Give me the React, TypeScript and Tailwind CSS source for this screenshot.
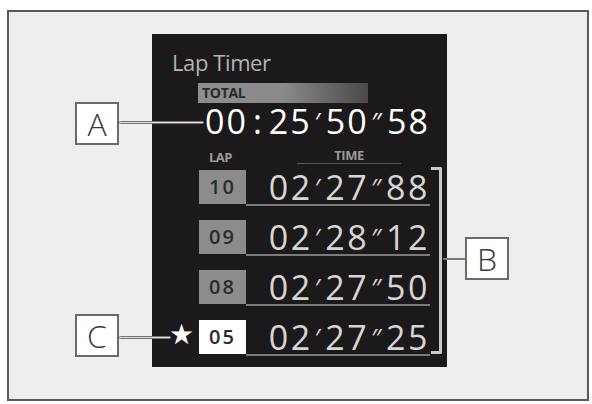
const FONT = { fontFamily: '"Open Sans", "DejaVu Sans", sans-serif' };

function Callout({ letter, className }: { letter: string; className: string }) {
  return (
    <div
      className={`absolute flex h-[43px] w-[44px] items-center justify-center border-2 border-[#6a6a6a] bg-white text-[32px] font-light leading-none text-[#3a3a3a] ${className}`}
      style={FONT}
    >
      {letter}
    </div>
  );
}

const laps = [
  { n: "10", t: ["02", "27", "88"], best: false },
  { n: "09", t: ["02", "28", "12"], best: false },
  { n: "08", t: ["02", "27", "50"], best: false },
  { n: "05", t: ["02", "27", "25"], best: true },
];

export default function App() {
  return (
    <div className="relative h-[404px] w-[592px] bg-white pl-[7px] pr-[3px] pt-[10px] pb-[3px]" style={FONT}>
      <div className="h-full w-full border-2 border-[#5a5a5a] bg-[#efeded] pl-[143px] pt-[22px]">
        {/* Display panel */}
        <div className="h-[333px] w-[295px] bg-[#1b1919] pl-[20px] pt-[14px]">
          <div className="text-[22px] font-medium leading-[28px] tracking-[-0.4px] text-[#b4b4b4]">Lap Timer</div>
          <div className="ml-[26px] mt-[7px] flex h-[20px] w-[170px] items-center bg-gradient-to-r from-[#8e8e8e] via-[#8a8a8a] to-[#4a4a4a] pl-[4px] text-[14px] font-bold leading-none tracking-[-0.3px] text-[#2a2a2a]">
            TOTAL
          </div>
          <div className="ml-[33px] mt-[5px] flex h-[26px] items-center text-[34px] font-medium leading-[26px] tracking-[2px] text-white">
            <span>00</span>
            <span className="mx-[5px]">:</span>
            <span>25</span>
            <span className="mx-[3px] text-[26px]">′</span>
            <span>50</span>
            <span className="mx-[3px] text-[26px]">″</span>
            <span>58</span>
          </div>
          <div className="ml-[37px] mt-[15px] flex items-end text-[13px] font-bold leading-[13px] tracking-[-0.5px] text-[#9a9a9a]">
            <span>LAP</span>
            <span className="ml-[65px] w-[104px] border-b border-[#5a5a5a] pb-[1px] text-center">TIME</span>
          </div>
          <div className="ml-[27px] mt-[6px] flex flex-col gap-[14px]">
            {laps.map((l) => (
              <div key={l.n} className="flex items-stretch">
                <div
                  className={`flex h-[34px] w-[47px] items-center justify-center text-[20px] font-semibold tracking-[2px] ${
                    l.best ? "bg-white text-[#2a2a2a]" : "bg-[#8c8c8c] text-[#2b2b2b]"
                  }`}
                >
                  {l.n}
                </div>
                <div className="flex w-[184px] items-end justify-end border-b-2 border-[#7a7a7a] text-[34px] leading-[34px] tracking-[2.5px] text-[#d6d6d6]">
                  <span>{l.t[0]}</span>
                  <span className="mx-[2px] text-[26px]">′</span>
                  <span>{l.t[1]}</span>
                  <span className="mx-[2px] text-[26px]">″</span>
                  <span>{l.t[2]}</span>
                </div>
              </div>
            ))}
          </div>
        </div>
      </div>

      {/* Annotations */}
      <Callout letter="A" className="left-[75px] top-[102px]" />
      <div className="absolute left-[119px] top-[121px] h-[3px] w-[85px] rounded-full border border-[#777] bg-[#ddd]" />

      <Callout letter="C" className="left-[75px] top-[314px]" />
      <div className="absolute left-[119px] top-[336px] h-[3px] w-[52px] rounded-full border border-[#777] bg-[#ddd]" />
      <div className="absolute left-[169px] top-[321px] text-[28px] leading-none text-white" style={{ fontFamily: '"DejaVu Sans", sans-serif' }}>
        ★
      </div>

      <div className="absolute left-[431px] top-[167px] h-[187px] w-[11px] rounded-r-[2px] border-y-[3px] border-r-[3px] border-[#c9c9c9]" />
      <div className="absolute left-[443px] top-[258px] h-[2px] w-[22px] bg-[#777]" />
      <Callout letter="B" className="left-[465px] top-[237px]" />
    </div>
  );
}
